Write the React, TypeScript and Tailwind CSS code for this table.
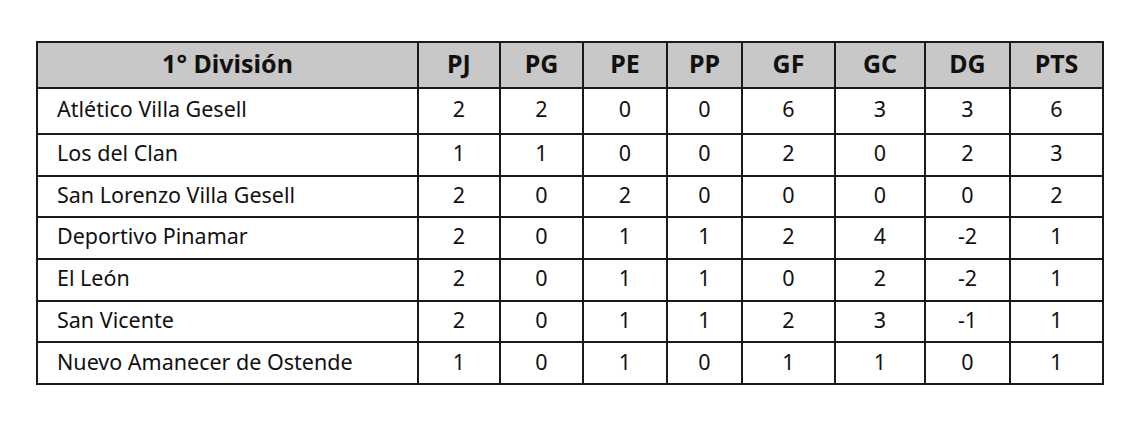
const rows = [
  ["Atlético Villa Gesell", 2, 2, 0, 0, 6, 3, 3, 6],
  ["Los del Clan", 1, 1, 0, 0, 2, 0, 2, 3],
  ["San Lorenzo Villa Gesell", 2, 0, 2, 0, 0, 0, 0, 2],
  ["Deportivo Pinamar", 2, 0, 1, 1, 2, 4, -2, 1],
  ["El León", 2, 0, 1, 1, 0, 2, -2, 1],
  ["San Vicente", 2, 0, 1, 1, 2, 3, -1, 1],
  ["Nuevo Amanecer de Ostende", 1, 0, 1, 0, 1, 1, 0, 1],
]

const headers = ["PJ", "PG", "PE", "PP", "GF", "GC", "DG", "PTS"]
const widths = [381, 82, 83, 84, 75, 93, 90, 85, 93]

export default function App() {
  return (
    <div className="w-[1144px] h-[427px] bg-white pt-[41px] pl-[36px] font-['Noto_Sans',sans-serif] text-[#111]">
      <table className="border-collapse table-fixed w-[1068px]">
        <colgroup>
          {widths.map((w, i) => (
            <col key={i} style={{ width: w }} />
          ))}
        </colgroup>
        <thead>
          <tr className="h-[46px] bg-[#c8c8c8]">
            <th className="border-2 border-[#1a1a1a] text-[25px] leading-none font-bold text-center pb-[3px]">1° División</th>
            {headers.map((h) => (
              <th key={h} className="border-2 border-[#1a1a1a] text-[25px] leading-none font-bold text-center pb-[3px]">
                {h}
              </th>
            ))}
          </tr>
        </thead>
        <tbody>
          {rows.map((r, i) => (
            <tr key={i} className={i === 0 ? "h-[46px]" : "h-[41.7px]"}>
              {r.map((c, j) => (
                <td
                  key={j}
                  className={`border-2 border-[#1a1a1a] text-[21.5px] leading-none pb-[4px] ${j === 0 ? "text-left pl-[19px]" : "text-center"}`}
                >
                  {c}
                </td>
              ))}
            </tr>
          ))}
        </tbody>
      </table>
    </div>
  )
}
